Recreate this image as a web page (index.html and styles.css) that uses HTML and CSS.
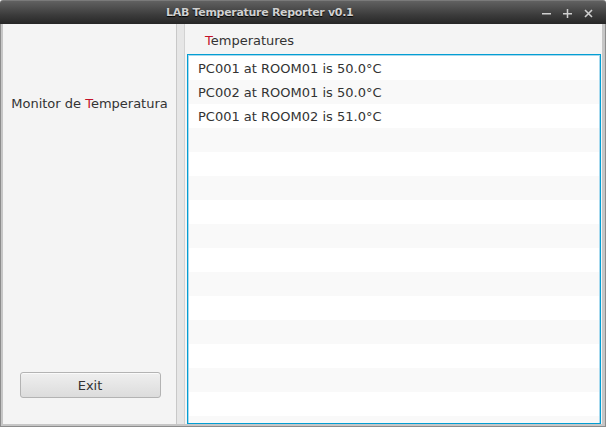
FILE: index.html
```html
<!DOCTYPE html>
<html>
<head>
<meta charset="utf-8">
<link rel="stylesheet" href="styles.css">
</head>
<body>
<div class="window">
  <div class="titlebar">
    <div class="title">LAB Temperature Reporter v0.1</div>
    <div class="controls">
      <span class="ctl">
        <svg width="9" height="9" viewBox="0 0 9 9"><rect x="0" y="4" width="9" height="1.5" fill="#cfcfcf"/></svg>
      </span>
      <span class="ctl">
        <svg width="9" height="9" viewBox="0 0 9 9"><rect x="0" y="4" width="9" height="1.5" fill="#cfcfcf"/><rect x="3.75" y="0" width="1.5" height="9" fill="#cfcfcf"/></svg>
      </span>
      <span class="ctl">
        <svg width="9" height="9" viewBox="0 0 9 9"><path d="M1 1 L8 8 M8 1 L1 8" stroke="#cfcfcf" stroke-width="1.6"/></svg>
      </span>
    </div>
  </div>
  <div class="frame">
    <div class="content">
      <div class="left">
        <div class="monitor">Monitor de <span class="mn">T</span>emperatura</div>
        <div class="spacer"></div>
        <button class="exit">Exit</button>
      </div>
      <div class="divider"></div>
      <div class="right">
        <div class="heading"><span class="mn">T</span>emperatures</div>
        <div class="list">
          <div class="row">PC001 at ROOM01 is 50.0°C</div>
          <div class="row odd">PC002 at ROOM01 is 50.0°C</div>
          <div class="row">PC001 at ROOM02 is 51.0°C</div>
          <div class="row odd"></div>
          <div class="row"></div>
          <div class="row odd"></div>
          <div class="row"></div>
          <div class="row odd"></div>
          <div class="row"></div>
          <div class="row odd"></div>
          <div class="row"></div>
          <div class="row odd"></div>
          <div class="row"></div>
          <div class="row odd"></div>
          <div class="row"></div>
          <div class="row odd"></div>
        </div>
      </div>
    </div>
  </div>
</div>
</body>
</html>
```

FILE: styles.css
```css
html, body {
  margin: 0;
  padding: 0;
  width: 606px;
  height: 427px;
  overflow: hidden;
  background: #f4f4f4;
}
.window {
  width: 606px;
  height: 427px;
  display: flex;
  flex-direction: column;
  font-family: "DejaVu Sans", sans-serif;
  font-size: 13px;
  color: #333;
}
.titlebar {
  height: 24px;
  flex: none;
  position: relative;
  background: linear-gradient(#616161, #3c3c3c 60%, #262626);
  border-top: 1px solid #7a7a7a;
  box-sizing: border-box;
  border-radius: 3px 3px 0 0;
}
.title {
  position: absolute;
  left: 166px;
  top: 5px;
  font-family: "DejaVu Sans", sans-serif;
  font-weight: bold;
  font-size: 11px;
  color: #d0d0d0;
  text-shadow: 0 1px 1px #000;
  white-space: nowrap;
  letter-spacing: -0.3px;
}
.controls {
  position: absolute;
  right: 13px;
  top: 8px;
  display: flex;
  gap: 12px;
}
.ctl {
  width: 9px;
  height: 9px;
  display: block;
}
.ctl svg { display: block; }
.frame {
  flex: 1;
  display: flex;
  border-left: 1px solid #8c8c8c;
  border-right: 1px solid #8c8c8c;
  border-bottom: 1px solid #8c8c8c;
  padding: 0 3px 2px 2px;
  background: #c6c6c6;
  min-height: 0;
}
.content {
  flex: 1;
  display: flex;
  background: #f4f4f4;
  min-height: 0;
}
.left {
  width: 173px;
  flex: none;
  display: flex;
  flex-direction: column;
  align-items: center;
}
.monitor {
  margin-top: 71px;
  line-height: 18px;
  white-space: nowrap;
}
.mn { color: #c4122a; }
.spacer { flex: 1; }
.exit {
  width: 141px;
  height: 26px;
  margin: 0 0 26px 1px;
  padding: 0;
  border: 1px solid #b3b3b3;
  border-radius: 3px;
  background: linear-gradient(#efefef, #dcdcdc);
  font-family: "DejaVu Sans", sans-serif;
  font-size: 13px;
  color: #333;
  box-shadow: inset 0 1px 0 #fafafa;
}
.divider {
  width: 7px;
  flex: none;
  background: #e6e6e6;
  border-left: 1px solid #c8c8c8;
  border-right: 1px solid #d2d2d2;
}
.right {
  flex: 1;
  display: flex;
  flex-direction: column;
  padding: 0 0 0 2px;
  min-width: 0;
}
.heading {
  height: 30px;
  line-height: 18px;
  padding: 8px 0 0 18px;
  box-sizing: border-box;
}
.list {
  flex: 1;
  border: 1px solid #039ed3;
  box-shadow: inset 0 0 0 1px #a8d9ee;
  background: #fff;
  padding: 1px;
  overflow: hidden;
  margin-right: 1px;
}
.row {
  height: 24px;
  box-sizing: border-box;
  padding-top: 1px;
  line-height: 23px;
  padding-left: 9px;
  white-space: nowrap;
  background: #fff;
}
.row.odd { background: #f9f9f9; }
```
